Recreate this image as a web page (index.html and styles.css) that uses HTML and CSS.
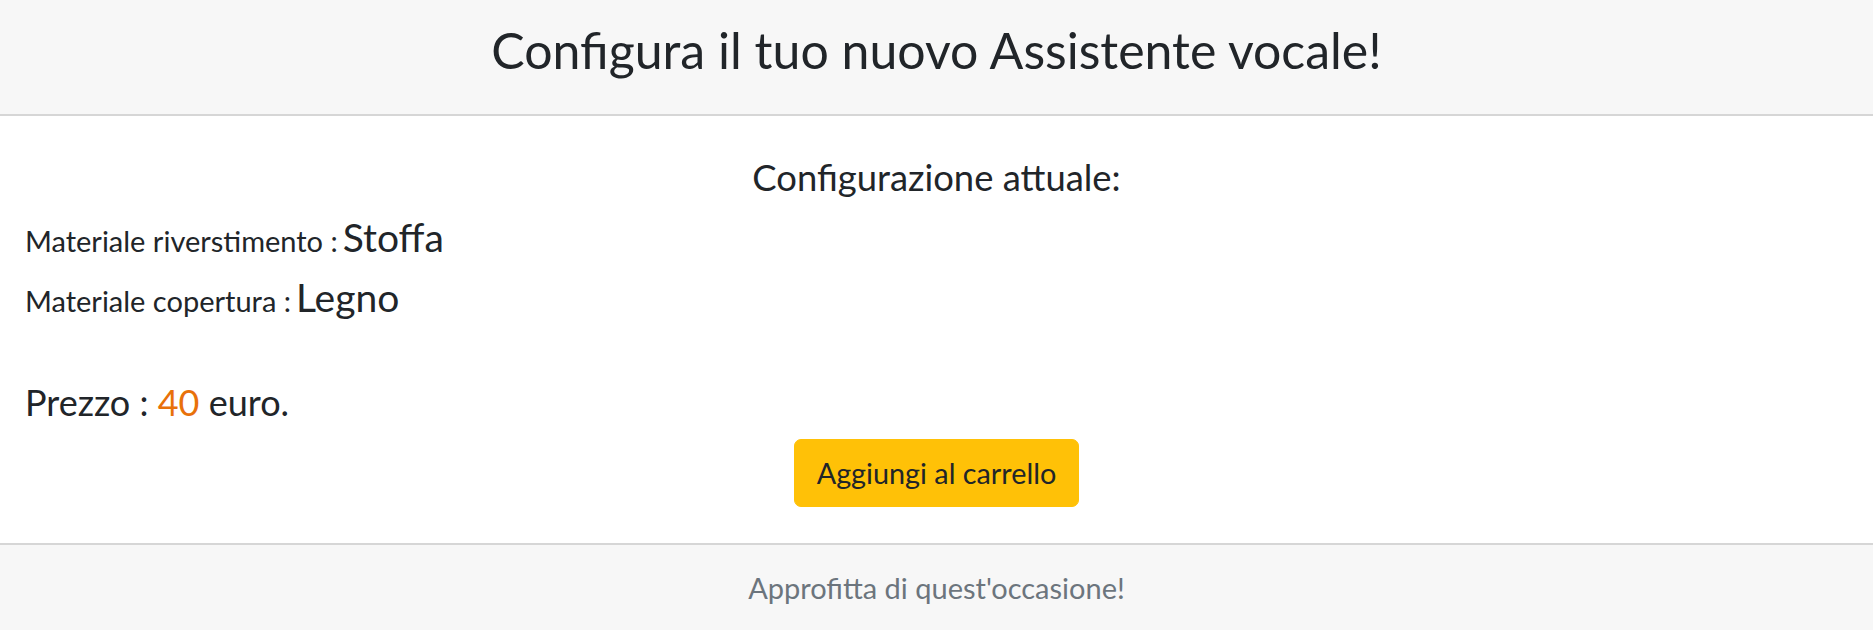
FILE: index.html
```html
<!DOCTYPE html>
<html lang="it">
<head>
<meta charset="utf-8">
<title>Configura il tuo nuovo Assistente vocale!</title>
<link rel="stylesheet" href="styles.css">
</head>
<body>
<div class="card">
  <div class="card-header">
    <h1 class="title">Configura il tuo nuovo Assistente vocale!</h1>
  </div>
  <div class="card-body">
    <h2 class="subtitle">Configurazione attuale:</h2>
    <div class="row"><span class="label">Materiale riverstimento :</span><span class="value">Stoffa</span></div>
    <div class="row"><span class="label">Materiale copertura :</span><span class="value">Legno</span></div>
    <div class="price">Prezzo : <span class="amount">40</span> euro.</div>
    <div class="actions"><button class="btn-cart" type="button">Aggiungi al carrello</button></div>
  </div>
  <div class="card-footer">Approfitta di quest'occasione!</div>
</div>
</body>
</html>
```
FILE: styles.css
```css
* { box-sizing: border-box; }
html, body { margin: 0; padding: 0; }
body {
  font-family: Lato, "Noto Sans", sans-serif;
  color: #212529;
  background: #ffffff;
}
.card {
  display: flex;
  flex-direction: column;
  min-height: 630px;
}
.card-header {
  background: #f7f7f7;
  border-bottom: 2px solid #d6d6d6;
  height: 116px;
  padding: 20px 25px 0;
}
.title {
  margin: 0;
  font-size: 50px;
  font-weight: 400;
  line-height: 60px;
  text-align: center;
}
.card-body {
  padding: 0 25px 36px;
  display: flex;
  flex-direction: column;
}
.subtitle {
  margin: 40px 0 0;
  font-size: 36.4px;
  font-weight: 400;
  line-height: 1.2;
  text-align: center;
}
.row {
  display: flex;
  align-items: baseline;
  gap: 5px;
  margin-top: 14px;
}
.label { font-size: 29px; line-height: 1.2; }
.value { font-size: 39px; line-height: 1.2; }
.price {
  margin-top: 60px;
  font-size: 36px;
  line-height: 1.2;
}
.amount { color: #e8710a; }
.actions {
  display: flex;
  justify-content: center;
  margin-top: 15px;
}
.btn-cart {
  font-family: Lato, "Noto Sans", sans-serif;
  font-size: 28.8px;
  line-height: 38px;
  padding: 14px 22px;
  color: #212529;
  background: #ffc107;
  border: 1px solid #ffc107;
  border-radius: 7px;
  cursor: pointer;
}
.card-footer {
  flex: 1;
  background: #f7f7f7;
  border-top: 2px solid #d6d6d6;
  display: flex;
  align-items: center;
  justify-content: center;
  font-size: 29px;
  color: #6c757d;
}
```
